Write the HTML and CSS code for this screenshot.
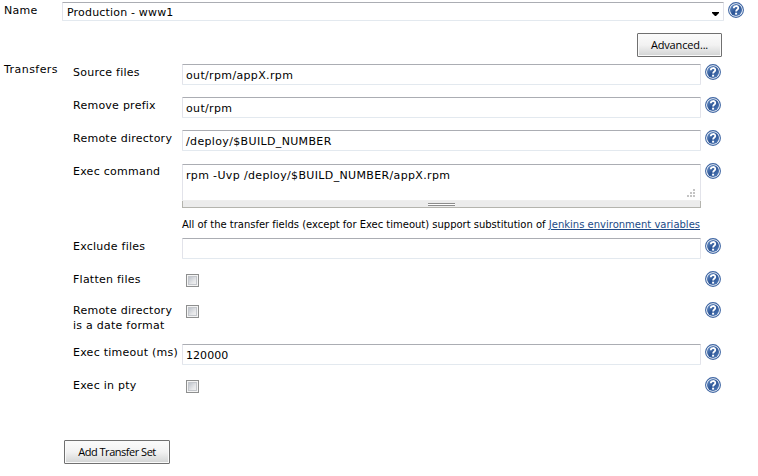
FILE: index.html
```
<!DOCTYPE html>
<html lang="en">
<head>
<meta charset="utf-8">
<title>Transfer configuration</title>
<link rel="stylesheet" href="styles.css">
</head>
<body>
<svg class="defs" width="0" height="0">
  <defs>
    <linearGradient id="disc" x1="0" y1="0" x2="1" y2="1">
      <stop offset="0" stop-color="#6f97cc"/><stop offset=".5" stop-color="#2c5596"/><stop offset="1" stop-color="#5580bd"/>
    </linearGradient>
    <symbol id="help" viewBox="0 0 16 16">
      <circle cx="8" cy="8" r="7.4" fill="#fff" stroke="#3f66a3" stroke-width="1.1"/>
      <circle cx="8" cy="8" r="6" fill="url(#disc)"/>
      <path d="M5.8 6.2C5.8 3.3 10.3 3.4 10.3 5.9C10.3 7.5 8.1 7.4 8.1 9.5" fill="none" stroke="#fff" stroke-width="1.8"/>
      <rect x="7.1" y="10.7" width="2" height="1.9" fill="#fff"/>
    </symbol>
  </defs>
</svg>
<main class="form">
  <div class="name-row">
    <span class="label">Name</span>
    <div class="field select"><span>Production - www1</span><svg class="arrow" width="7" height="4" viewBox="0 0 7 4"><path d="M0 0H7V1L4 4H3L0 1Z"/></svg></div>
    <svg class="help"><use href="#help"/></svg>
  </div>
  <div class="advanced"><button class="btn btn-adv">Advanced...</button></div>
  <div class="transfers">
    <span class="label label-wide">Transfers</span>
    <div class="set">
      <div class="row"><span class="label">Source files</span><div class="field">out/rpm/appX.rpm</div><svg class="help"><use href="#help"/></svg></div>
      <div class="row"><span class="label">Remove prefix</span><div class="field">out/rpm</div><svg class="help"><use href="#help"/></svg></div>
      <div class="row"><span class="label">Remote directory</span><div class="field">/deploy/$BUILD_NUMBER</div><svg class="help"><use href="#help"/></svg></div>
      <div class="row row-command"><span class="label">Exec command</span>
        <div class="command">
          <div class="field area">rpm -Uvp /deploy/$BUILD_NUMBER/appX.rpm
            <svg class="grip" width="8" height="8" viewBox="0 0 8 8"><path d="M6 0h2v2H6zM3 3h2v2H3zM6 3h2v2H6zM0 6h2v2H0zM3 6h2v2H3zM6 6h2v2H6z"/></svg>
          </div>
          <div class="handle"><i class="bars"></i></div>
          <p class="note"><span class="note-text">All of the transfer fields (except for Exec timeout) support substitution of</span> <a class="link" href="#">Jenkins environment variables</a></p>
        </div>
        <svg class="help"><use href="#help"/></svg></div>
      <div class="row"><span class="label">Exclude files</span><div class="field"></div><svg class="help"><use href="#help"/></svg></div>
      <div class="row row-flatten"><span class="label">Flatten files</span><i class="check"></i><svg class="help"><use href="#help"/></svg></div>
      <div class="row row-date"><span class="label">Remote directory<br>is a date format</span><i class="check"></i><svg class="help"><use href="#help"/></svg></div>
      <div class="row"><span class="label">Exec timeout (ms)</span><div class="field field-number">120000</div><svg class="help"><use href="#help"/></svg></div>
      <div class="row"><span class="label">Exec in pty</span><i class="check"></i><svg class="help"><use href="#help"/></svg></div>
    </div>
  </div>
  <button class="btn btn-add">Add Transfer Set</button>
</main>
</body>
</html>
```

FILE: styles.css
```
* { box-sizing: border-box; }
body {
  margin: 0;
  width: 758px;
  height: 476px;
  overflow: hidden;
  background: #fff;
  color: #000;
  font: 11px/15px "DejaVu Sans", Verdana, sans-serif;
}
.defs { position: absolute; }
.form { display: flex; flex-direction: column; padding: 2px 0 0 4px; }
.label { white-space: nowrap; padding-top: 1px; letter-spacing: .25px; }
.label-wide { letter-spacing: .45px; }
.help { width: 16px; height: 16px; display: block; }
.field {
  height: 21px;
  border: 1px solid #e2e3ea;
  border-top-color: #abadb3;
  border-bottom-color: #e3e9ef;
  border-radius: 1px;
  padding: 3px 4px 0 3px;
  white-space: nowrap;
  letter-spacing: .35px;
}
.field-number { letter-spacing: .05px; }
.name-row { display: grid; grid-template-columns: 58px 662px 16px; height: 31px; }
.name-row .help { margin-left: 4px; }
.select { display: flex; justify-content: space-between; height: 19px; padding: 2px 4px 0; letter-spacing: .18px; }
.arrow { margin: 7px 0 0; }
.advanced { width: 718px; height: 31px; display: flex; justify-content: flex-end; align-items: flex-start; }
.btn {
  height: 24px;
  padding: 0;
  border: 1px solid #707070;
  border-radius: 1px;
  background: linear-gradient(#fbfbfb, #f2f2f2 50%, #dcdddd 85%, #d0d2d2);
  box-shadow: inset 0 0 0 1px #fafafa;
  color: #000;
  font: 11px/20px "Open Sans", "Segoe UI", sans-serif;
}
.btn-adv { width: 85px; letter-spacing: -.15px; }
.btn-add { width: 106px; margin: 30px 0 0 60px; letter-spacing: -.48px; }
.transfers { display: grid; grid-template-columns: 69px 648px; }
.transfers > .label { margin-top: -3px; }
.row { display: grid; grid-template-columns: 109px 519px 16px; height: 33px; align-items: start; }
.row .help { margin-left: 4px; }
.row-command { height: 75px; }
.row-flatten { height: 31px; }
.row-date { height: 42px; }
.command { padding-top: 1px; }
.area { position: relative; height: 37px; border-bottom-color: #eee; }
.grip { position: absolute; right: 5px; bottom: 3px; fill: #c4c4c4; }
.handle {
  height: 7px;
  background: #ececec;
  border: 1px solid #b4b4ae;
  border-top: 0;
  display: flex;
  justify-content: center;
}
.bars { width: 27px; height: 3px; margin-top: 2px; border: solid #8c8c8c; border-width: 1px 0; background: #fff; }
.note { margin: 9px 0 0; font-size: 10px; line-height: 15px; white-space: nowrap; display: flex; justify-content: space-between; padding-right: 1px; }
.note-text { letter-spacing: -.015px; }
.link { color: #204a87; text-decoration: underline; }
.check {
  width: 13px;
  height: 13px;
  margin: 3px 0 0 4px;
  border: 1px solid #8e8f8f;
  background: linear-gradient(135deg, #aeb5c0, #e6e7e9 60%, #f7f7f7);
  box-shadow: inset 0 0 0 1px #f4f4f4, inset 0 0 0 2px #c4c7cc;
}
```
